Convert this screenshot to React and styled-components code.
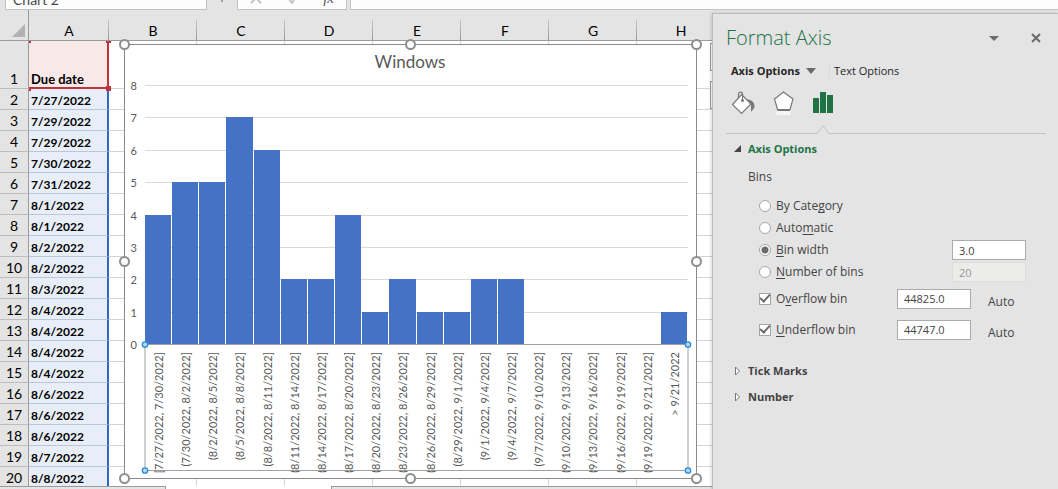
import { useState } from "react";
import styled, { createGlobalStyle, css } from "styled-components";

const columns = ["A", "B", "C", "D", "E", "F", "G", "H"];

const dueDates = [
  "7/27/2022",
  "7/29/2022",
  "7/29/2022",
  "7/30/2022",
  "7/31/2022",
  "8/1/2022",
  "8/1/2022",
  "8/2/2022",
  "8/2/2022",
  "8/3/2022",
  "8/4/2022",
  "8/4/2022",
  "8/4/2022",
  "8/4/2022",
  "8/6/2022",
  "8/6/2022",
  "8/6/2022",
  "8/7/2022",
  "8/8/2022",
];

const bins = [
  { label: "[7/27/2022, 7/30/2022]", count: 4 },
  { label: "(7/30/2022, 8/2/2022]", count: 5 },
  { label: "(8/2/2022, 8/5/2022]", count: 5 },
  { label: "(8/5/2022, 8/8/2022]", count: 7 },
  { label: "(8/8/2022, 8/11/2022]", count: 6 },
  { label: "(8/11/2022, 8/14/2022]", count: 2 },
  { label: "(8/14/2022, 8/17/2022]", count: 2 },
  { label: "(8/17/2022, 8/20/2022]", count: 4 },
  { label: "(8/20/2022, 8/23/2022]", count: 1 },
  { label: "(8/23/2022, 8/26/2022]", count: 2 },
  { label: "(8/26/2022, 8/29/2022]", count: 1 },
  { label: "(8/29/2022, 9/1/2022]", count: 1 },
  { label: "(9/1/2022, 9/4/2022]", count: 2 },
  { label: "(9/4/2022, 9/7/2022]", count: 2 },
  { label: "(9/7/2022, 9/10/2022]", count: 0 },
  { label: "(9/10/2022, 9/13/2022]", count: 0 },
  { label: "(9/13/2022, 9/16/2022]", count: 0 },
  { label: "(9/16/2022, 9/19/2022]", count: 0 },
  { label: "(9/19/2022, 9/21/2022]", count: 0 },
  { label: "> 9/21/2022", count: 1 },
];

// Plot area inside the chart svg
const plot = { left: 26, top: 46, width: 543, height: 259 };
const maxCount = 8;

function Chart() {
  const step = plot.width / bins.length;
  const unit = plot.height / maxCount;
  const bottom = plot.top + plot.height;
  const right = plot.left + plot.width;
  const axisBottom = bottom + 126;

  return (
    <ChartFrame>
      <svg width="584" height="445" role="img" aria-label="Windows histogram">
        <rect x="5.5" y="5.5" width="572" height="434" fill="#fff" stroke="#8a8a8a" />
        <text x="291" y="29" textAnchor="middle" fontSize="17" fill="#595959">
          Windows
        </text>

        {Array.from({ length: maxCount + 1 }, (_, n) => {
          const y = Math.round(bottom - n * unit);
          return (
            <g key={n}>
              <line x1={plot.left} x2={right} y1={y + 0.5} y2={y + 0.5} stroke="#d9d9d9" />
              <text x="18" y={y + 5} textAnchor="end" fontSize="11" fill="#595959">
                {n}
              </text>
            </g>
          );
        })}

        {bins.map(({ label, count }, i) => {
          const x = Math.round(plot.left + i * step);
          const next = Math.round(plot.left + (i + 1) * step);
          const y = Math.round(bottom - count * unit);
          return (
            <g key={label}>
              <rect x={x} y={y} width={next - x - 1} height={bottom - y} fill="#4472c4" />
              <text
                transform={`translate(${x + 18} ${bottom + 8}) rotate(-90)`}
                textAnchor="end"
                fontSize="11"
                fill="#595959"
              >
                {label}
              </text>
            </g>
          );
        })}

        {/* selected horizontal axis */}
        <rect
          x={plot.left}
          y={bottom + 0.5}
          width={plot.width}
          height={axisBottom - bottom}
          fill="none"
          stroke="#a0a0a0"
        />
        {[plot.left, right].map((x) =>
          [bottom + 0.5, axisBottom + 0.5].map((y) => (
            <circle key={`${x}-${y}`} cx={x} cy={y} r="2.7" fill="#b5d8f5" stroke="#2a8ad4" strokeWidth="1.3" />
          ))
        )}

        {/* resize handles */}
        {[5.5, 291.5, 577.5].map((x) =>
          [5.5, 222.5, 439.5].map((y) =>
            x === 291.5 && y === 222.5 ? null : (
              <circle key={`${x}-${y}`} cx={x} cy={y} r="4.5" fill="#fff" stroke="#8e8e8e" strokeWidth="2" />
            )
          )
        )}
      </svg>
    </ChartFrame>
  );
}

function Sheet() {
  return (
    <SheetArea>
      <Grid>
        <colgroup>
          <col width="29" />
          <col width="80" />
          {columns.slice(1).map((c) => (
            <col key={c} width="88" />
          ))}
        </colgroup>
        <thead>
          <tr>
            <Corner aria-label="Select all">
              <svg width="13" height="13">
                <path d="M13 0V13H0Z" fill="#b2b2b2" />
              </svg>
            </Corner>
            {columns.map((c) => (
              <ColHead key={c} scope="col">
                {c}
              </ColHead>
            ))}
          </tr>
        </thead>
        <tbody>
          <tr>
            <RowHead $tall scope="row">
              1
            </RowHead>
            <HeaderCell>Due date</HeaderCell>
            {columns.slice(1).map((c) => (
              <Cell key={c} />
            ))}
          </tr>
          {dueDates.map((date, i) => (
            <tr key={i}>
              <RowHead scope="row">{i + 2}</RowHead>
              <DateCell>{date}</DateCell>
              {columns.slice(1).map((c) => (
                <Cell key={c} />
              ))}
            </tr>
          ))}
        </tbody>
      </Grid>
      <RangeHandles width="84" height="52" aria-hidden="true">
        <path d="M1 1h2v2H1zM78 1h5v2H78zM1 47h2v4H1zM78 46h5v5H78z" fill="#c0323c" />
      </RangeHandles>
      <Chart />
      <ChartTools>
        <ToolButton aria-label="Chart elements" />
        <ToolButton aria-label="Chart styles" />
      </ChartTools>
    </SheetArea>
  );
}

function FormatPanel() {
  const [mode, setMode] = useState("width");

  return (
    <Panel>
      <PanelHeader>
        <PanelTitle>Format Axis</PanelTitle>
        <IconButton aria-label="Pane options">
          <svg width="10" height="5">
            <path d="M0 0H10L5 5Z" fill="#6a6a6a" />
          </svg>
        </IconButton>
        <IconButton aria-label="Close">
          <svg width="10" height="10">
            <path d="M1 1L9 9M9 1L1 9" stroke="#6a6a6a" strokeWidth="2" />
          </svg>
        </IconButton>
      </PanelHeader>

      <Tabs>
        <TabButton $active>
          Axis Options
          <svg width="10" height="6">
            <path d="M0 0H10L5 6Z" fill="#6a6a6a" />
          </svg>
        </TabButton>
        <TabButton>Text Options</TabButton>
      </Tabs>

      <IconTabs>
        <IconButton aria-label="Fill and line">
          <svg width="24" height="24" fill="none">
            <path d="M16 8.500C20 8.500 23.500 11 23.500 15C23.500 18 21 19 20 21V14Z" fill="#777" />
            <path d="M10.500 3.500L20 13L10.500 22.500L1.500 13.500Z" fill="#fff" stroke="#777" strokeWidth="1.200" />
            <path d="M7.500 7.500V3C7.500 .5 11.500 .5 11.500 3V10" stroke="#777" strokeWidth="1.200" />
            <circle cx="11.500" cy="9.500" r="1.500" fill="#777" />
          </svg>
        </IconButton>
        <IconButton aria-label="Effects">
          <svg width="22" height="24" fill="none">
            <path d="M4 20H17L18 24H3Z" fill="#f6f6f6" />
            <path d="M10.500 1L20 8L17 18.500H4.500L1.500 8Z" fill="#fff" stroke="#777" strokeWidth="1.200" />
            <path d="M4.500 19H17" stroke="#777" strokeWidth="2" />
          </svg>
        </IconButton>
        <IconButton aria-label="Axis options">
          <svg width="20" height="24">
            <path d="M0 7H6V22H0ZM7 1H13V22H7ZM14 4H20V22H14Z" fill="#217346" />
          </svg>
        </IconButton>
      </IconTabs>
      <TabRule>
        <svg width="14" height="9" fill="none">
          <path d="M0 9V8.500H1L7 .7L13 8.500H14V9Z" fill="#e4e4e4" />
          <path d="M0 8.500H1L7 .7L13 8.500H14" stroke="#c3c3c3" />
        </svg>
      </TabRule>

      <SectionButton $open>
        <svg width="8" height="8">
          <path d="M7 0V7H0Z" fill="#444" />
        </svg>
        Axis Options
      </SectionButton>

      <Options>
        <legend>Bins</legend>
        <OptionRow>
          <Radio id="category" name="bins" checked={mode === "category"} onChange={() => setMode("category")} />
          <label htmlFor="category">
            By Cate<u>g</u>ory
          </label>
        </OptionRow>
        <OptionRow>
          <Radio id="automatic" name="bins" checked={mode === "automatic"} onChange={() => setMode("automatic")} />
          <label htmlFor="automatic">
            Auto<u>m</u>atic
          </label>
        </OptionRow>
        <OptionRow>
          <Radio id="width" name="bins" checked={mode === "width"} onChange={() => setMode("width")} />
          <label htmlFor="width">
            <u>B</u>in width
          </label>
          <Field aria-label="Bin width" defaultValue="3.0" disabled={mode !== "width"} />
        </OptionRow>
        <OptionRow>
          <Radio id="number" name="bins" checked={mode === "number"} onChange={() => setMode("number")} />
          <label htmlFor="number">
            <u>N</u>umber of bins
          </label>
          <Field aria-label="Number of bins" defaultValue="20" disabled={mode !== "number"} />
        </OptionRow>
        <OptionRow $tall>
          <Checkbox id="overflow" defaultChecked />
          <label htmlFor="overflow">
            O<u>v</u>erflow bin
          </label>
          <Field aria-label="Overflow bin" defaultValue="44825.0" />
          <AutoText>Auto</AutoText>
        </OptionRow>
        <OptionRow $tall>
          <Checkbox id="underflow" defaultChecked />
          <label htmlFor="underflow">
            <u>U</u>nderflow bin
          </label>
          <Field aria-label="Underflow bin" defaultValue="44747.0" />
          <AutoText>Auto</AutoText>
        </OptionRow>
      </Options>

      {["Tick Marks", "Number"].map((name) => (
        <SectionButton key={name}>
          <svg width="8" height="10" fill="none">
            <path d="M1.500 1L5.500 5L1.500 9Z" fill="#fff" stroke="#777" />
          </svg>
          {name}
        </SectionButton>
      ))}
    </Panel>
  );
}

function App() {
  return (
    <Page>
      <GlobalStyle />
      <FormulaBar>
        <NameBox aria-label="Name box" defaultValue="Chart 2" />
        <Dots />
        <FormulaTools>
          <svg width="12" height="12">
            <path d="M1 1L11 11M11 1L1 11" stroke="#c4c4c4" strokeWidth="2" />
          </svg>
          <svg width="12" height="12" fill="none">
            <path d="M1 6L5 11L11 1" stroke="#c4c4c4" strokeWidth="2" />
          </svg>
          <i>fx</i>
        </FormulaTools>
        <FormulaInput aria-label="Formula" />
      </FormulaBar>
      <Workspace>
        <SheetColumn>
          <Sheet />
          <SheetTabs>
            <ActiveTab />
          </SheetTabs>
        </SheetColumn>
        <FormatPanel />
      </Workspace>
    </Page>
  );
}

const GlobalStyle = createGlobalStyle`
  * {
    box-sizing: border-box;
  }

  body {
    margin: 0;
    background: #e4e4e4;
    font-family: Lato, sans-serif;
  }

  button,
  input {
    font: inherit;
    color: inherit;
  }

  svg {
    display: block;
    flex: none;
  }
`;

const Page = styled.div`
  display: flex;
  flex-direction: column;
  height: 100vh;
  overflow: hidden;
`;

const FormulaBar = styled.div`
  display: flex;
  align-items: flex-end;
  flex: none;
  height: 10px;
  padding-left: 5px;
  overflow: hidden;
`;

const barBox = css`
  height: 22px;
  border: 1px solid #c3c3c3;
  background: #fdfdfd;
`;

const NameBox = styled.input`
  ${barBox}
  width: 202px;
  padding: 0 7px;
  color: #444;
  font-size: 14px;
`;

const Dots = styled.span`
  width: 2px;
  height: 2px;
  margin: 0 14px 8px;
  background: #a0a0a0;
`;

const FormulaTools = styled.div`
  ${barBox}
  display: flex;
  align-items: center;
  justify-content: space-between;
  width: 110px;
  padding: 0 12px 2px;
  color: #555;
  font-family: "Liberation Serif", serif;
  font-size: 15px;
`;

const FormulaInput = styled.input`
  ${barBox}
  flex: 1;
  min-width: 0;
  margin-left: 3px;
  border-right: 0;
`;

const Workspace = styled.main`
  display: flex;
  flex: 1;
  min-height: 0;
`;

const SheetColumn = styled.div`
  display: flex;
  flex-direction: column;
  flex: 1;
  min-width: 0;
`;

const SheetArea = styled.div`
  position: relative;
  flex: 1;
  min-height: 0;
  overflow: hidden;
  background: linear-gradient(#e4e4e4 31px, #fff 31px);
`;

const Grid = styled.table`
  width: 725px;
  table-layout: fixed;
  border-spacing: 0;
  color: #000;

  th,
  td {
    padding: 0;
  }
`;

const Corner = styled.th`
  height: 31px;
  border-right: 1px solid #9b9b9b;
  border-bottom: 1px solid #9b9b9b;
  background: #e4e4e4;

  svg {
    margin: 10px 0 0 12px;
  }
`;

const ColHead = styled.th`
  height: 31px;
  border-bottom: 1px solid #9b9b9b;
  background:
    linear-gradient(#c8c8c8, #9b9b9b) right bottom / 1px 21px no-repeat,
    #e4e4e4;
  font-size: 14px;
  font-weight: 400;
  line-height: 18px;
  vertical-align: bottom;
`;

const RowHead = styled.th`
  height: ${({ $tall }) => ($tall ? 48 : 21)}px;
  border-right: 1px solid #9b9b9b;
  border-bottom: 1px solid #bdbdbd;
  background: #e4e4e4;
  font-size: 14px;
  font-weight: 400;
  line-height: 18px;
  vertical-align: bottom;
`;

const Cell = styled.td`
  border-right: 1px solid #d4d4d4;
  border-bottom: 1px solid #d4d4d4;
  background: #fff;
`;

const DateCell = styled(Cell)`
  && {
    padding-left: 2px;
  }
  border-right: 2px solid #2f66c4;
  border-bottom-color: #bcc6d8;
  background: #e8eef8;
  font-size: 12px;
  font-weight: 700;
  line-height: 16px;
  vertical-align: bottom;
`;

const HeaderCell = styled(DateCell)`
  border-right-color: #c0323c;
  border-bottom: 2px solid #c0323c;
  background: #f8e8e8;
  font-size: 13px;
`;

const RangeHandles = styled.svg`
  position: absolute;
  top: 30px;
  left: 28px;
`;

const ChartFrame = styled.div`
  position: absolute;
  top: 29px;
  left: 119px;
`;

const ChartTools = styled.div`
  position: absolute;
  top: 33px;
  left: 710px;
  display: flex;
  flex-direction: column;
  gap: 10px;
`;

const ToolButton = styled.button`
  width: 28px;
  height: 28px;
  border: 1px solid #9b9b9b;
  background: #fff;
`;

const SheetTabs = styled.div`
  flex: none;
  height: 3px;
  padding-left: 165px;
  border-top: 1px solid #9b9b9b;
`;

const ActiveTab = styled.div`
  width: 167px;
  height: 3px;
  margin-top: -1px;
  border: solid #9b9b9b;
  border-width: 0 1px;
  background: #fff;
`;

const Panel = styled.aside`
  position: relative;
  flex: none;
  width: 346px;
  margin-top: 3px;
  padding: 12px 12px 0 13px;
  border: solid #bdbdbd;
  border-width: 1px 0 0 1px;
  background: #e4e4e4;
  box-shadow: -1px 0 3px rgba(0, 0, 0, 0.15);
  color: #444;
  font-family: "Open Sans", sans-serif;
  font-size: 12px;
  line-height: 16px;
`;

const PanelHeader = styled.header`
  display: flex;
  align-items: center;
  gap: 32px;
  height: 24px;
  padding-right: 5px;
`;

const PanelTitle = styled.h1`
  flex: 1;
  margin: 0;
  color: #217346;
  font-size: 20px;
  font-weight: 300;
  line-height: 24px;
`;

const IconButton = styled.button`
  display: flex;
  padding: 0;
  border: 0;
  background: none;
`;

const Tabs = styled.div`
  display: flex;
  margin-top: 13px;
  padding-left: 5px;
`;

const TabButton = styled.button`
  display: flex;
  align-items: center;
  gap: 6px;
  padding: 0;
  border: 0;
  background: none;
  color: #262626;
  font-size: 11px;
  font-weight: ${({ $active }) => ($active ? 700 : 400)};

  & + & {
    margin-left: 13px;
    padding-left: 4px;
    border-left: 1px solid #dadada;
  }
`;

const IconTabs = styled.div`
  display: flex;
  gap: 18px;
  margin-top: 12px;
  padding-left: 5px;
`;

const TabRule = styled.div`
  height: 9px;
  margin-top: 10px;
  padding-left: 90px;
  background: linear-gradient(#c3c3c3, #c3c3c3) bottom / 100% 1px no-repeat;
`;

const SectionButton = styled.button`
  display: flex;
  align-items: center;
  gap: 6px;
  margin-top: 10px;
  padding: 0 0 0 8px;
  border: 0;
  background: none;
  color: ${({ $open }) => ($open ? "#217346" : "#444")};
  font-size: 11px;
  font-weight: 700;
  line-height: 16px;

  ${({ $open }) =>
    $open &&
    css`
      margin-top: 7px;
    `}
`;

const Options = styled.fieldset`
  margin: 12px 0 18px;
  padding: 0 20px 0 33px;
  border: 0;

  legend {
    margin: 0 0 10px -11px;
    padding: 0;
  }
`;

const OptionRow = styled.div`
  display: flex;
  align-items: center;
  height: ${({ $tall }) => ($tall ? 31 : 22)}px;

  label {
    flex: 1;
    margin-left: 5px;
  }

  u {
    text-decoration-skip-ink: none;
    text-underline-offset: 2px;
  }
`;

const toggle = css`
  appearance: none;
  flex: none;
  width: 12px;
  height: 12px;
  margin: 0;
  border: 1px solid #a6a6a6;
  background: #fff;
`;

const Radio = styled.input.attrs({ type: "radio" })`
  ${toggle}
  border-radius: 50%;

  &:checked {
    background: radial-gradient(#6a6a6a 3px, #fff 4px);
  }
`;

const Checkbox = styled.input.attrs({ type: "checkbox" })`
  ${toggle}
  display: grid;
  place-items: center;

  &:checked::before {
    content: "";
    width: 8px;
    height: 4px;
    margin-bottom: 3px;
    border: solid #6a6a6a;
    border-width: 0 0 2px 2px;
    rotate: -48deg;
  }
`;

const Field = styled.input`
  width: 74px;
  height: 20px;
  padding: 0 6px;
  border: 1px solid #ababab;
  background: #fff;
  font-size: 11px;

  &:disabled {
    border-color: #dcdcdc;
    background: #ececea;
    color: #999;
  }
`;

const AutoText = styled.span`
  width: 38px;
  margin-left: 17px;
  padding-top: 6px;
`;

export default App;
